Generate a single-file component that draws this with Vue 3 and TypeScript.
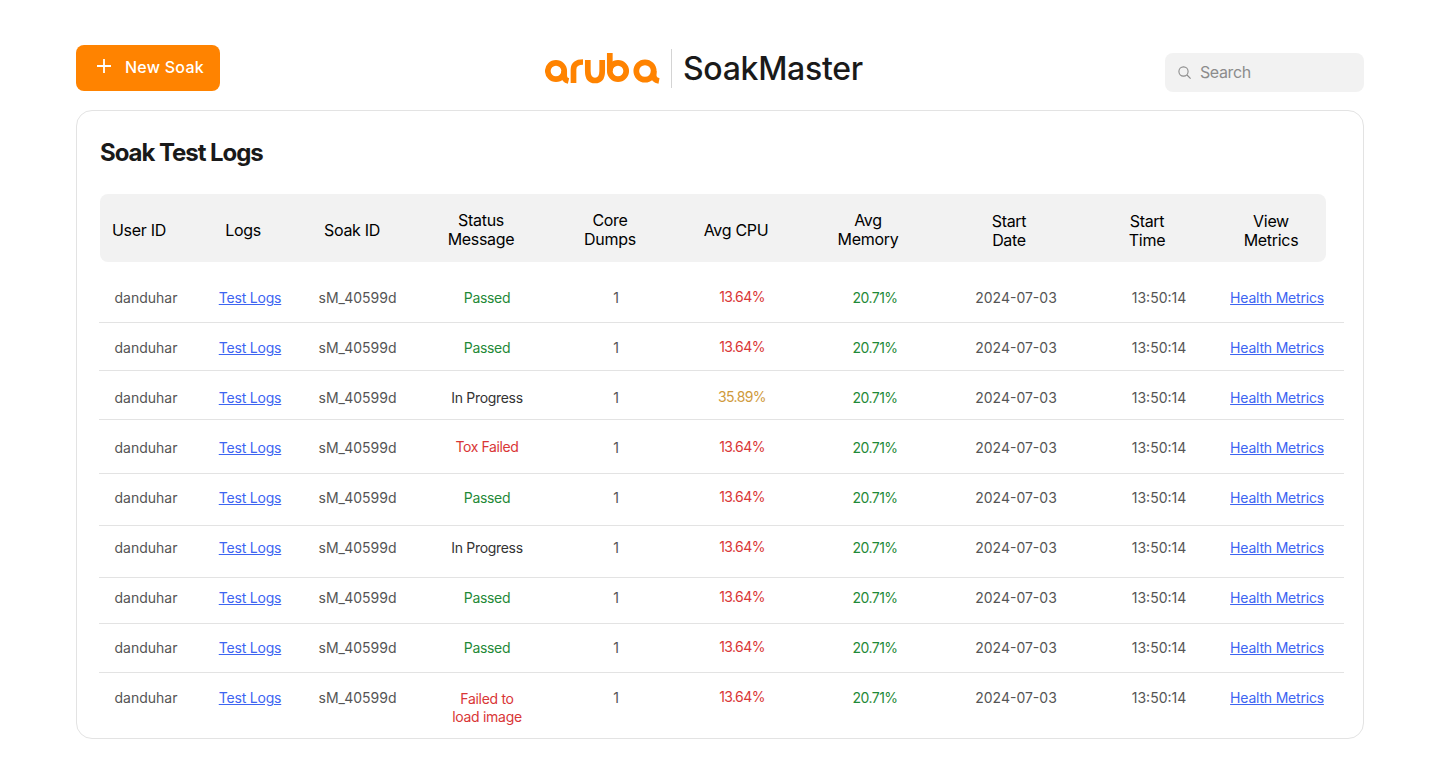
<script setup lang="ts">
import { ref } from 'vue';

interface SoakRow {
    status: string;
    statusTone: string;
    cpu: string;
    cpuTone: string;
    // the rows of the table are not even: space above the text and full height
    pad: number;
    height: number;
}

const rows = ref<SoakRow[]>([
    { status: 'Passed', statusTone: 'good', cpu: '13.64%', cpuTone: 'bad', pad: 26, height: 61 },
    { status: 'Passed', statusTone: 'good', cpu: '13.64%', cpuTone: 'bad', pad: 15, height: 48 },
    { status: 'In Progress', statusTone: 'plain', cpu: '35.89%', cpuTone: 'warn', pad: 17, height: 49 },
    { status: 'Tox Failed', statusTone: 'bad status--up', cpu: '13.64%', cpuTone: 'bad', pad: 18, height: 54 },
    { status: 'Passed', statusTone: 'good', cpu: '13.64%', cpuTone: 'bad', pad: 14, height: 52 },
    { status: 'In Progress', statusTone: 'plain', cpu: '13.64%', cpuTone: 'bad', pad: 12, height: 52 },
    { status: 'Passed', statusTone: 'good', cpu: '13.64%', cpuTone: 'bad', pad: 10, height: 46 },
    { status: 'Passed', statusTone: 'good', cpu: '13.64%', cpuTone: 'bad', pad: 14, height: 49 },
    { status: 'Failed to load image', statusTone: 'bad status--long', cpu: '13.64%', cpuTone: 'bad', pad: 15, height: 65 },
]);

const headers = ['User ID', 'Logs', 'Soak ID', 'Status\nMessage', 'Core\nDumps', 'Avg CPU', 'Avg\nMemory', 'Start\nDate', 'Start\nTime', 'View\nMetrics'];
</script>

<template>
    <main class="page">
        <header class="top">
            <button class="new-soak">
                <svg class="new-soak__plus" width="14" height="14" viewBox="0 0 14 14">
                    <path d="M7 0V14M0 7H14" stroke="#fff" stroke-width="1.8" fill="none" />
                </svg>
                New Soak
            </button>
            <div class="brand">
                <svg class="brand__logo" width="115" height="31" viewBox="0 0 115 31" fill="none" stroke="#ff8300" stroke-width="5.7">
                    <circle cx="11" cy="18" r="8.2" />
                    <path d="M19.2 18V23Q19.2 27 23.5 28" />
                    <path d="M28.5 30V16.5Q28.5 9 38 9" />
                    <path d="M42.8 7V18Q42.8 27.5 50 27.5Q57.2 27.5 57.2 18V7" />
                    <path d="M64.8 0V18" />
                    <circle cx="73" cy="18" r="8.2" />
                    <circle cx="100" cy="18" r="8.7" />
                    <path d="M108.7 18V23Q108.7 27 114 28" />
                </svg>
                <span class="brand__divider"></span>
                <span class="brand__name">SoakMaster</span>
            </div>
            <div class="search">
                <svg width="13" height="13" viewBox="0 0 13 13" fill="none" stroke="#8c8c8c" stroke-width="1.1">
                    <circle cx="5.5" cy="5.5" r="4.6" />
                    <path d="M9 9L12.6 12.6" />
                </svg>
                <span>Search</span>
            </div>
        </header>

        <section class="card">
            <h1 class="card__title">Soak Test Logs</h1>
            <div class="table-head">
                <div v-for="h in headers" :key="h" class="table-head__cell">{{ h }}</div>
            </div>
            <div
                v-for="(row, i) in rows"
                :key="i"
                class="table-row"
                :style="{ paddingTop: row.pad + 'px', height: row.height + 'px' }"
            >
                <div>danduhar</div>
                <div><a href="#" class="link">Test Logs</a></div>
                <div>sM_40599d</div>
                <div :class="['status', row.statusTone]">{{ row.status }}</div>
                <div>1</div>
                <div :class="['cpu', row.cpuTone]">{{ row.cpu }}</div>
                <div class="memory good">20.71%</div>
                <div>2024-07-03</div>
                <div>13:50:14</div>
                <div><a href="#" class="link">Health Metrics</a></div>
            </div>
        </section>
    </main>
</template>

<style>
html,
body {
    background: #fff;
}
</style>

<style scoped>
.page {
    box-sizing: border-box;
    width: 1440px;
    height: 784px;
    padding: 45px 76px 0;
    font-family: Inter, 'Liberation Sans', sans-serif;
    overflow: hidden;
}

.top {
    display: flex;
    align-items: flex-start;
    height: 46px;
}

.new-soak {
    display: flex;
    align-items: center;
    gap: 14px;
    box-sizing: border-box;
    width: 144px;
    height: 46px;
    padding: 0 0 2px 21px;
    border: none;
    border-radius: 8px;
    background: #ff8300;
    color: #fff;
    font-family: inherit;
    font-size: 16px;
    font-weight: 500;
    letter-spacing: 0.25px;
}

.new-soak__plus {
    margin-bottom: 2px;
}

.brand {
    display: flex;
    align-items: center;
    height: 46px;
    margin-left: 325px;
}

.brand__logo {
    display: block;
}

.brand__divider {
    width: 1px;
    height: 39px;
    margin: 0 12px 0 11px;
    background: #d4d4d4;
}

.brand__name {
    margin-left: -1px;
    font-size: 32px;
    font-weight: 500;
    color: #1a1a1a;
    letter-spacing: -0.3px;
}

.search {
    display: flex;
    align-items: center;
    gap: 9px;
    box-sizing: border-box;
    width: 199px;
    height: 39px;
    margin: 8px 0 0 auto;
    padding: 0 0 1px 13px;
    border-radius: 8px;
    background: #f2f2f2;
    color: #8c8c8c;
    font-size: 16px;
    letter-spacing: -0.4px;
}

.card {
    box-sizing: border-box;
    height: 629px;
    margin-top: 19px;
    padding: 27px 0 0 23px;
    border: 1px solid #e3e3e3;
    border-radius: 16px;
}

.card__title {
    margin: 0 0 27px;
    font-size: 24px;
    line-height: 29px;
    font-weight: 700;
    letter-spacing: -1.05px;
    color: #1a1a1a;
}

.table-head {
    display: grid;
    grid-template-columns: 78px 130px 88px 170px 88px 164px 100px 182px 94px 132px;
    align-items: center;
    width: 1226px;
    height: 68px;
    border-radius: 8px;
    background: #f2f2f2;
    font-size: 16px;
    line-height: 19px;
    letter-spacing: -0.3px;
    color: #000;
    text-align: center;
}

.table-head__cell {
    padding-top: 4px;
    white-space: pre-line;
}

.table-head__cell:nth-child(n + 8) {
    padding-top: 6px;
}

.table-head__cell:last-child {
    padding-left: 22px;
}

.table-row {
    box-sizing: border-box;
    display: grid;
    grid-template-columns: 94px 114px 101px 158px 100px 152px 114px 168px 118px 118px;
    align-items: start;
    width: 1245px;
    margin-left: -1px;
    border-bottom: 1px solid #e3e3e3;
    font-size: 14px;
    line-height: 20px;
    color: #555;
    text-align: center;
}

.table-row:last-child {
    border-bottom: none;
}

.link {
    color: #3d64f2;
    text-decoration: underline;
    white-space: nowrap;
    letter-spacing: -0.2px;
}

.status {
    letter-spacing: -0.3px;
}

.good {
    color: #1f8a38;
}

.bad {
    color: #d93636;
}

.warn {
    color: #cf9a3c;
}

.plain {
    color: #333;
}

.cpu {
    margin-top: -1px;
    letter-spacing: -0.6px;
}

.memory {
    letter-spacing: -0.5px;
}

.status--up {
    margin-top: -1px;
    letter-spacing: -0.4px;
}

.status--long {
    box-sizing: border-box;
    width: 76px;
    justify-self: center;
    padding-top: 2px;
    line-height: 18px;
}
</style>
